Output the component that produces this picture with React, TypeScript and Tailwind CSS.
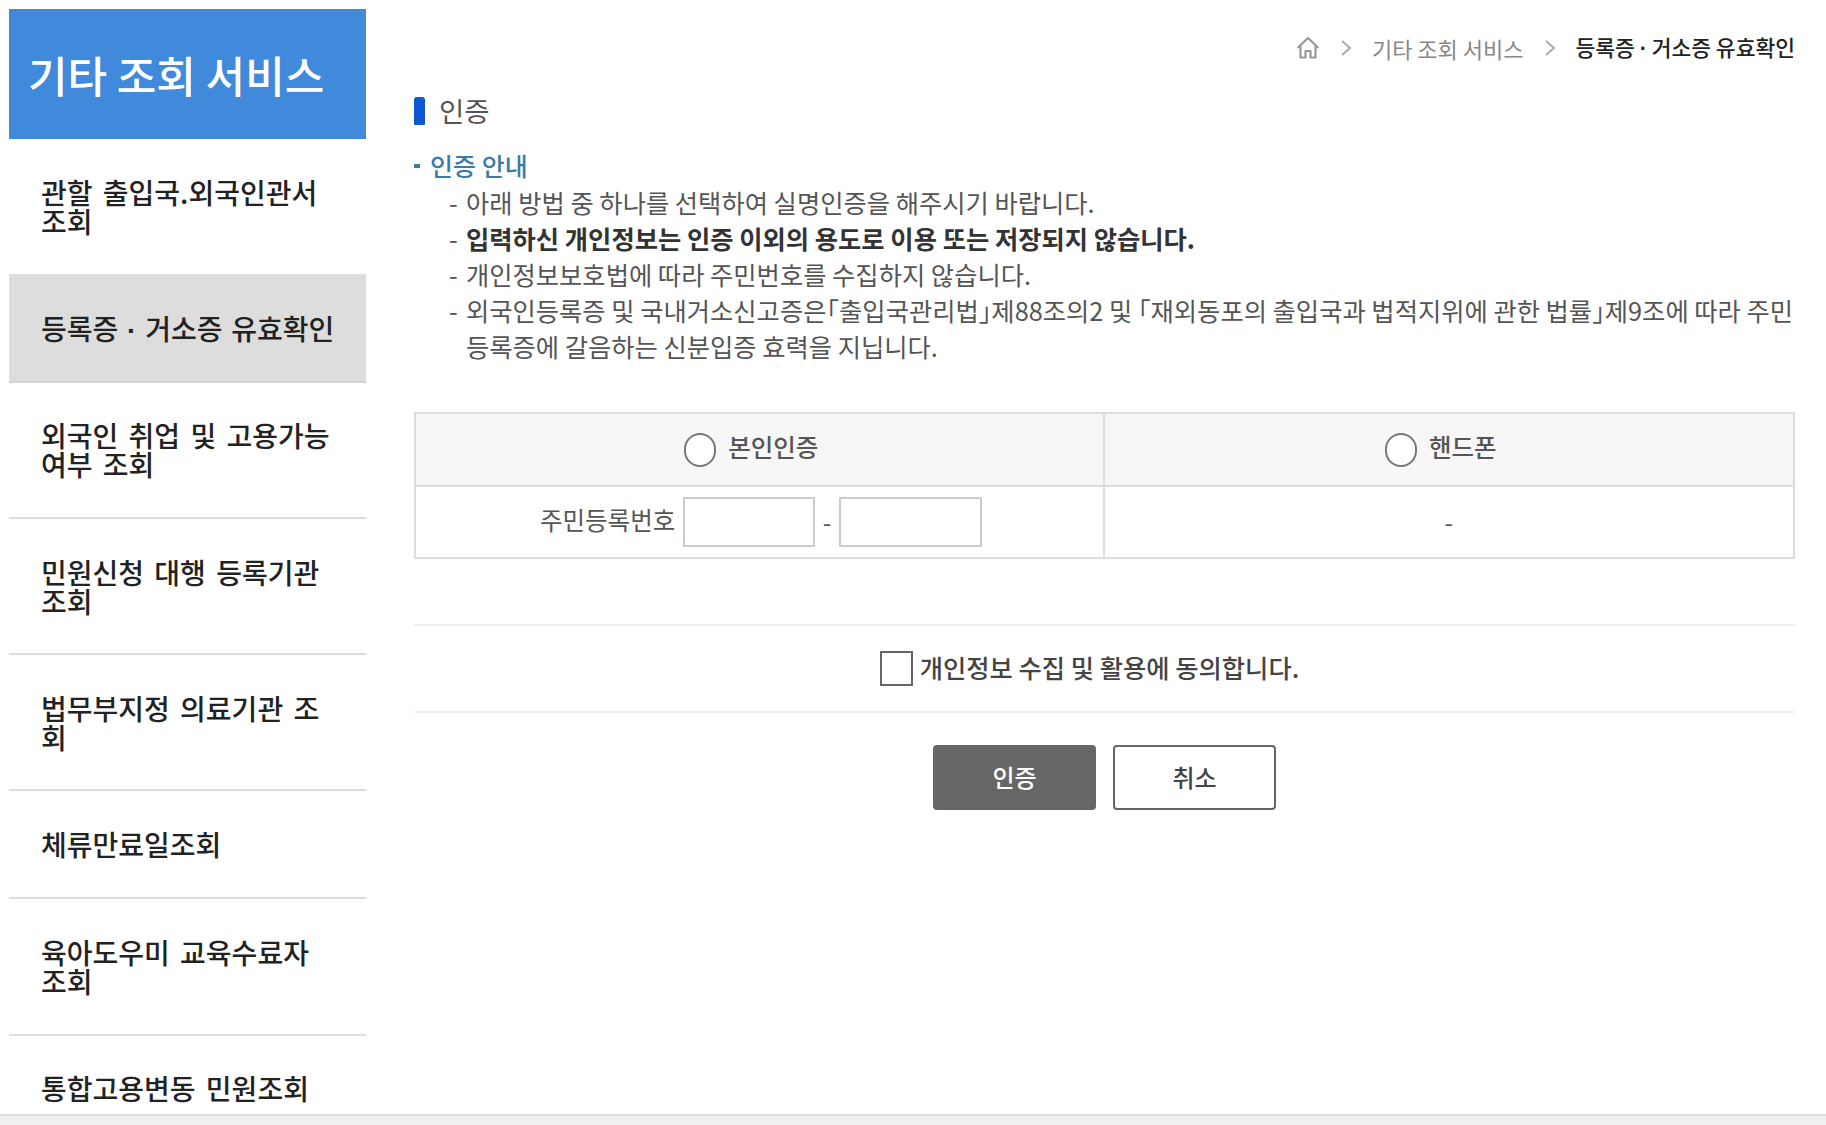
const menu = [
  { label: "관할 출입국.외국인관서 조회", cls: "h-[135px] pt-[2px] border-transparent", inner: "" },
  { label: <>등록증 <Dot /> 거소증 유효확인</>, cls: "h-[109px] pt-[4px] whitespace-nowrap bg-[#dddddd] border-[#d4d4d4]", inner: "[word-spacing:2.500px]" },
  { label: "외국인 취업 및 고용가능 여부 조회", cls: "h-[136px] border-[#dddddd]", inner: "" },
  { label: "민원신청 대행 등록기관 조회", cls: "h-[136px] pt-[2px] border-[#dddddd]", inner: "" },
  { label: "법무부지정 의료기관 조회", cls: "h-[136px] pt-[2px] border-[#dddddd]", inner: "" },
  { label: "체류만료일조회", cls: "h-[108px] border-[#dddddd]", inner: "" },
  { label: "육아도우미 교육수료자 조회", cls: "h-[137px] border-[#dddddd]", inner: "" },
  { label: "통합고용변동 민원조회", cls: "h-[105px] pt-[2px] border-transparent", inner: "" },
];

function Dot() {
  return <span className="font-['Liberation_Sans'] font-bold">·</span>;
}

function Home() {
  return (
    <svg width="24" height="24" viewBox="0 0 24 24" fill="none" stroke="#999999" strokeWidth="2.200" strokeLinejoin="round">
      <path d="M1.500 12 12 2l10.500 10" />
      <path d="M4.500 10v11.500h5V15h5v6.500h5V10" />
    </svg>
  );
}

function Chevron() {
  return (
    <svg width="12" height="18" viewBox="0 0 12 18" fill="none" stroke="#aaaaaa" strokeWidth="2">
      <path d="M2 2l8 7-8 7" />
    </svg>
  );
}

function Dash() {
  return <span className="absolute left-[35px] top-0 font-normal text-[#555555]">-</span>;
}

export default function App() {
  return (
    <div className="relative h-[1125px] w-[1826px] overflow-hidden bg-white font-['Noto_Sans_CJK_KR','Noto_Sans',sans-serif]">
      <div className="flex pl-[9px] pt-[9px]">
        <aside className="w-[357px] shrink-0">
          <div className="flex h-[130px] items-center bg-[#4189db] pl-[19px] text-[43px] font-medium text-white">
            기타 조회 서비스
          </div>
          {menu.map((m, i) => (
            <div
              key={i}
              className={`flex items-center border-b-2 pl-[32px] pr-[36px] text-[28px] font-medium leading-[29px] text-[#222222] [word-spacing:4px] ${m.cls}`}
            >
              <span className={m.inner}>{m.label}</span>
            </div>
          ))}
        </aside>
        <main className="ml-[48px] w-[1381px] shrink-0">
          <nav className="flex h-[56px] items-center justify-end gap-[20px] pt-[22px] text-[22px]">
            <Home />
            <Chevron />
            <span className="text-[#888888]">기타 조회 서비스</span>
            <Chevron />
            <span className="text-[21.500px] font-medium text-[#222222]">등록증 <Dot /> 거소증 유효확인</span>
          </nav>
          <h2 className="mt-[26px] flex h-[40px] items-center gap-[14px] text-[27.500px] text-[#555555]">
            <span className="h-[28px] w-[11px] rounded-t-[3px] rounded-b-[1px] bg-[#0d56d6]" />
            인증
          </h2>
          <div className="mt-[17px] flex h-[36px] items-center text-[25px] font-medium text-[#3b7ca6]">
            <span className="mr-[10px] h-[4px] w-[6px] bg-[#3b7ca6]" />
            인증 안내
          </div>
          <ul className="text-[25.300px] leading-[36px] text-[#555555]">
            <li className="relative pl-[52px]"><Dash />아래 방법 중 하나를 선택하여 실명인증을 해주시기 바랍니다.</li>
            <li className="relative pl-[52px] font-bold text-[#333333]"><Dash />입력하신 개인정보는 인증 이외의 용도로 이용 또는 저장되지 않습니다.</li>
            <li className="relative pl-[52px]"><Dash />개인정보보호법에 따라 주민번호를 수집하지 않습니다.</li>
            <li className="relative pl-[52px]"><Dash />외국인등록증 및 국내거소신고증은｢출입국관리법｣제88조의2 및 ｢재외동포의 출입국과 법적지위에 관한 법률｣제9조에 따라 주민 등록증에 갈음하는 신분입증 효력을 지닙니다.</li>
          </ul>

          <div className="mt-[48px] grid h-[147px] grid-cols-2 grid-rows-[73px_70px] border-2 border-[#dddddd] text-[24.500px] text-[#555555]">
            <div className="flex items-center justify-center gap-[12px] border-b-2 border-r-2 border-[#dddddd] bg-[#f7f7f7] pr-[16px] font-medium">
              <span className="h-[34px] w-[32px] rounded-full border-2 border-[#777777] bg-white" />
              <span className="pb-[4px]">본인인증</span>
            </div>
            <div className="flex items-center justify-center gap-[12px] border-b-2 border-[#dddddd] bg-[#f7f7f7] pr-[16px] font-medium">
              <span className="h-[34px] w-[32px] rounded-full border-2 border-[#777777] bg-white" />
              <span className="pb-[4px]">핸드폰</span>
            </div>
            <div className="flex items-center border-r-2 border-[#dddddd] pl-[124px]">
              <span className="w-[136px] whitespace-nowrap pb-[4px]">주민등록번호</span>
              <span className="ml-[7px] h-[50px] w-[132px] border-2 border-[#cccccc] bg-white" />
              <span className="w-[24px] text-center">-</span>
              <span className="h-[50px] w-[143px] border-2 border-[#cccccc] bg-white" />
            </div>
            <div className="flex items-center justify-center">-</div>
          </div>

          <div className="mt-[65px] flex h-[89px] items-center justify-center gap-[7px] border-y-2 border-[#f2f2f2] pr-[30px] text-[25.300px] font-medium text-[#444444]">
            <span className="h-[35px] w-[33px] border-2 border-[#666666] bg-white" />
            <span className="pb-[2px]">개인정보 수집 및 활용에 동의합니다.</span>
          </div>

          <div className="mt-[32px] flex justify-center gap-[17px] text-[24px] font-medium">
            <button className="h-[65px] w-[163px] rounded-[4px] bg-[#666666] pb-[2px] text-white">인증</button>
            <button className="h-[65px] w-[163px] rounded-[4px] border-2 border-[#666666] bg-white pb-[2px] text-[#444444]">취소</button>
          </div>
        </main>
      </div>
      <div className="absolute bottom-0 left-0 h-[11px] w-full border-t-2 border-[#dddddd] bg-[#f0f0f0]" />
    </div>
  );
}
